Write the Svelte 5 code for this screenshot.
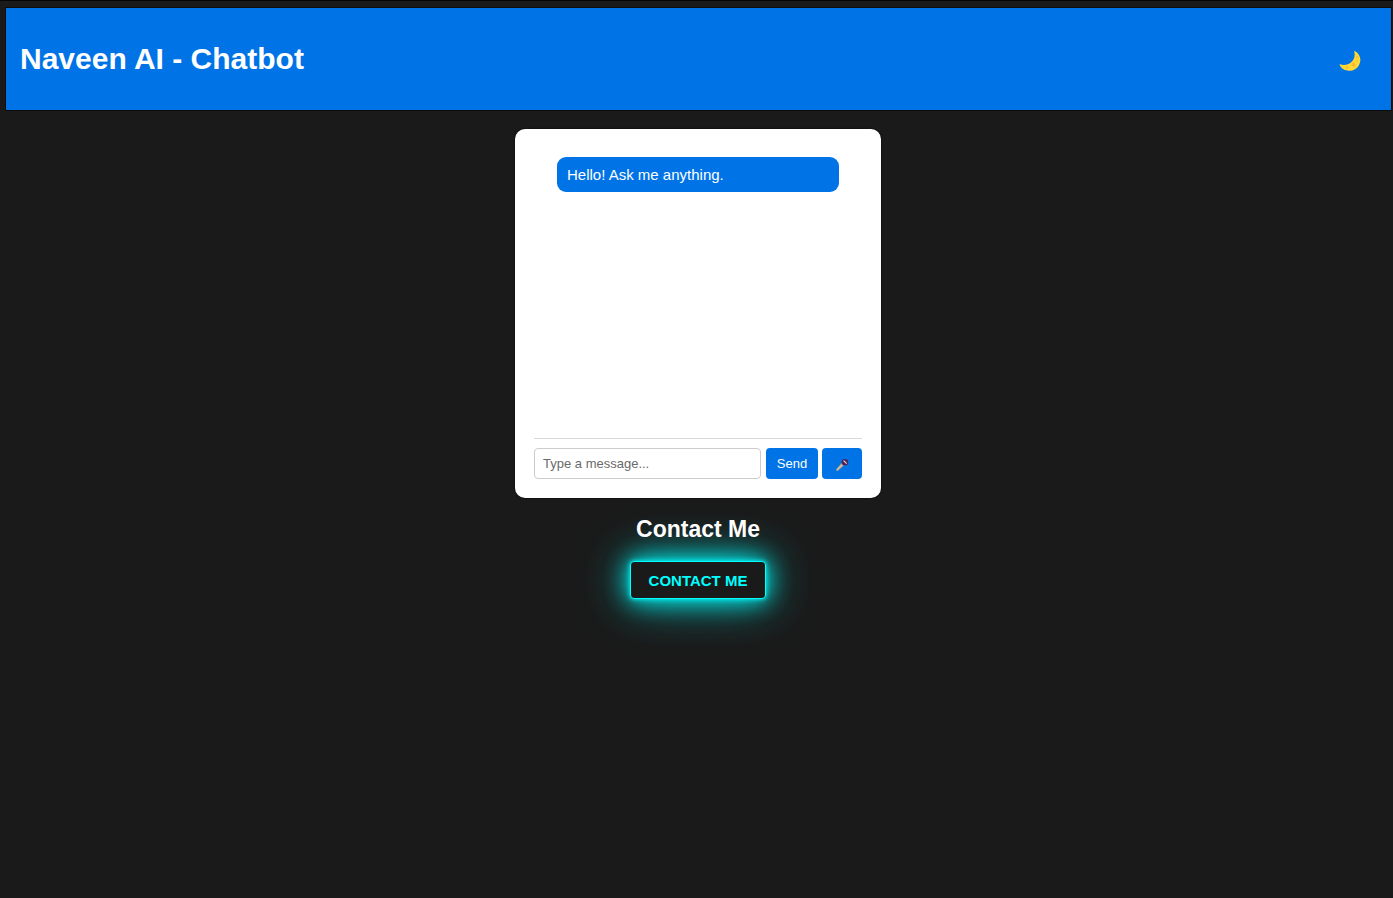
<script>
  let message = $state('');
  let messages = $state(['Hello! Ask me anything.']);

  function send(event) {
    event.preventDefault();
    if (!message.trim()) return;
    messages.push(message.trim());
    message = '';
  }
</script>

<div class="page">
  <header>
    <h1>Naveen AI - Chatbot</h1>
    <button class="theme" type="button" aria-label="Toggle theme">
      <svg width="22" height="22" viewBox="0 0 22 22" aria-hidden="true">
        <path
          d="M15.8 1C20 3.2 22.3 7.8 21 12.5C19.5 18.5 14 21.6 8.5 20.6C4.8 20 1.8 17.8 .6 14.9C.5 14.4 .9 14.2 1.5 14.5C5.7 15.7 10.5 14.5 13.4 11C15.7 8.2 16.1 5 15.2 1.6C15.1 1.1 15.4 .8 15.8 1Z"
          fill="#fdd835"
        />
        <circle cx="14.5" cy="14.8" r="2.1" fill="#f9b936" />
        <circle cx="18.2" cy="7" r="1.1" fill="#f9b936" />
        <circle cx="8" cy="17.5" r="1.2" fill="#f9b936" />
        <circle cx="18" cy="11" r=".8" fill="#f9b936" />
      </svg>
    </button>
  </header>

  <main>
    <section class="chat" aria-label="Chat">
      <div class="messages">
        {#each messages as text}
          <p>{text}</p>
        {/each}
      </div>
      <form onsubmit={send}>
        <input type="text" placeholder="Type a message..." aria-label="Message" bind:value={message} />
        <button type="submit">Send</button>
        <button class="mic" type="button" aria-label="Voice input">
          <svg width="14" height="14" viewBox="0 0 14 14" aria-hidden="true">
            <path d="M6.7 4.8L9.2 7.3L2.8 12.9C2 13.5 .6 12.2 1.2 11.3Z" fill="#a39b94" />
            <path d="M2 11.8L8 6" stroke="#d2c7a0" stroke-width="1.2" />
            <circle cx="9.9" cy="4.3" r="3.3" fill="#4c2556" />
            <path d="M8.6 2.6L11.7 5.7" stroke="#ded5dc" stroke-width="1.2" />
          </svg>
        </button>
      </form>
    </section>

    <section class="contact">
      <h2>Contact Me</h2>
      <a href="#contact">CONTACT ME</a>
    </section>
  </main>
</div>

<style>
  :global(body) {
    background: #1a1a1a;
  }

  .page {
    box-sizing: border-box;
    min-height: 100vh;
    padding: 8px 2px 0 6px;
    background: #1a1a1a;
    box-shadow: inset 0 1px #050505;
    color: #fff;
    font-family: 'Liberation Sans', Arial, sans-serif;
  }

  header {
    display: flex;
    align-items: center;
    justify-content: space-between;
    box-sizing: border-box;
    min-height: 102px;
    padding: 0 30px 0 14px;
    background: #0073e6;
    box-shadow: 0 0 0 1px #0c0c0c;
  }

  h1 {
    margin: 0;
    font-size: 30px;
    line-height: 36px;
  }

  button {
    border: 0;
    background: #0073e6;
    color: #fff;
    font-family: inherit;
    font-size: 13px;
    cursor: pointer;
  }

  svg {
    display: block;
  }

  .theme {
    padding: 4px 0 0;
  }

  main {
    display: flex;
    flex-direction: column;
    align-items: center;
    gap: 16px;
    padding: 19px 1px 0 0;
  }

  .chat {
    box-sizing: border-box;
    width: 366px;
    max-width: 100%;
    padding: 19px;
    border-radius: 10px;
    background: #fff;
    box-shadow: 0 0 2px #000;
  }

  .messages {
    box-sizing: border-box;
    height: 290px;
    overflow-y: auto;
    padding: 9px 23px;
  }

  p {
    margin: 0 0 10px;
    padding: 9px 10px;
    border-radius: 9px;
    background: #0073e6;
    font-size: 15px;
    line-height: 17px;
  }

  form {
    display: flex;
    gap: 4px;
    padding-top: 9px;
    border-top: 1px solid #d9d9d9;
  }

  input {
    box-sizing: border-box;
    flex: 1;
    min-width: 0;
    height: 31px;
    margin-right: 1px;
    padding: 0 8px;
    border: 1px solid #ccc;
    border-radius: 4px;
    background: #fff;
    color: #222;
    font-family: inherit;
    font-size: 13px;
  }

  input::placeholder {
    color: #6a6a6a;
  }

  form button {
    width: 52px;
    padding: 0;
    border-radius: 4px;
  }

  form .mic {
    display: flex;
    align-items: center;
    justify-content: center;
    width: 40px;
    padding-top: 2px;
  }

  .contact {
    display: flex;
    flex-direction: column;
    align-items: center;
    gap: 17px;
  }

  h2 {
    position: relative;
    margin: 0;
    font-size: 23px;
    line-height: 30px;
  }

  a {
    padding: 10px 18px 9px;
    border: 1px solid #0ff;
    border-radius: 4px;
    background: #1a1a1a;
    box-shadow: 0 0 5px #0ff, 0 0 24px #0ff, 0 0 47px rgba(0, 255, 255, 0.75);
    color: #0ff;
    font-size: 15px;
    font-weight: bold;
    line-height: 17px;
    text-decoration: none;
  }
</style>
